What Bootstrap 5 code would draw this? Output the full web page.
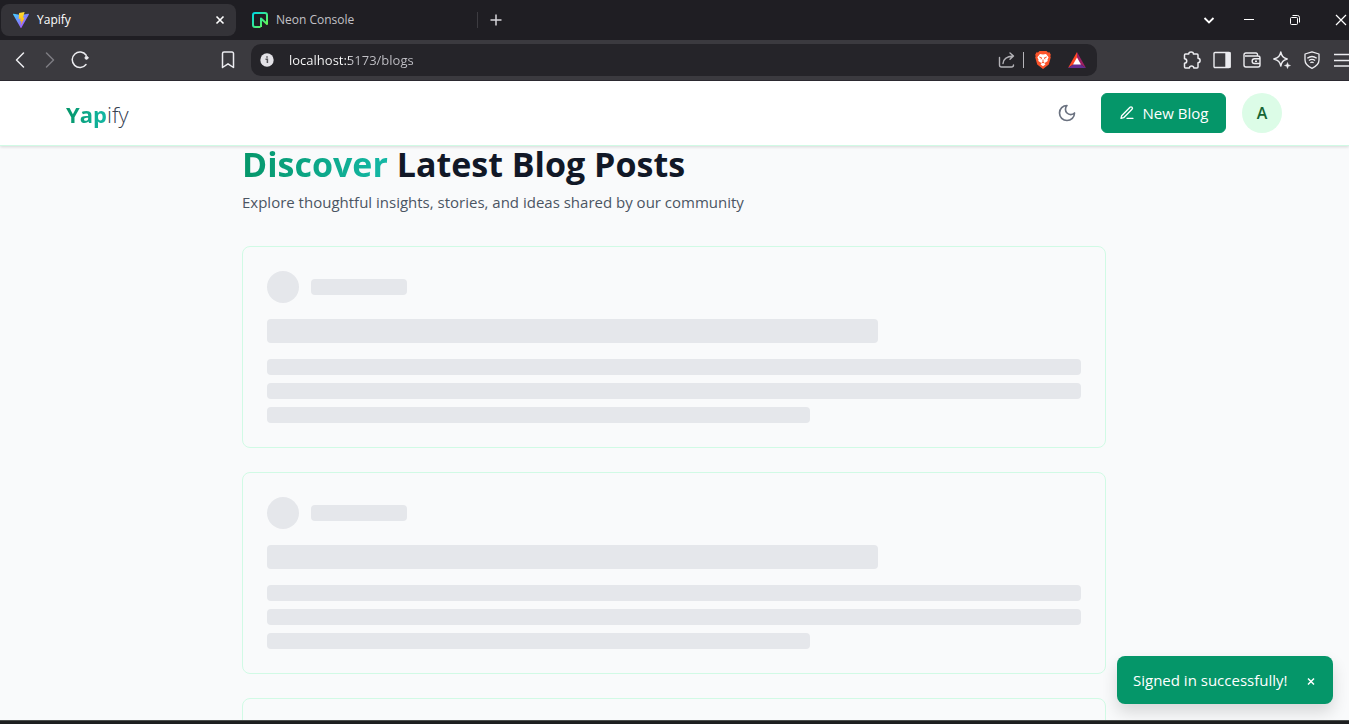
<!DOCTYPE html>
<html lang="en">
<head>
<meta charset="utf-8">
<meta name="viewport" content="width=device-width, initial-scale=1">
<title>Yapify</title>
<link rel="stylesheet" href="https://cdn.jsdelivr.net/npm/bootstrap@5.3.0/dist/css/bootstrap.min.css">
<style>
  body { font-family: "Open Sans", "Noto Sans", sans-serif; font-size: 15px; line-height: 24px; background: #1d1f1f; }
  svg { display: block; flex-shrink: 0; }
  button { color: inherit; }
  .icon-btn { border: 0; background: none; padding: 0; line-height: 1; }

  /* browser window */
  .tab-strip { height: 40px; background: #1f1e23; color: #fff; font-size: 12px; line-height: 16px; }
  .tab { height: 32px; width: 235px; margin-left: 1px; padding: 0 10px 0 12px; border-radius: 8px; }
  .tab.current { background: #343338; }
  .tab a { color: #fff; }
  .tab.other { padding-left: 15px; }
  .tab.other a { color: #c2c1c6; }
  .tab-rule { width: 1px; height: 16px; background: #3d3c41; margin-left: 5px; }
  .window-buttons { gap: 30px; }
  .tab-search { margin-right: -6px; }
  .tool-strip { height: 41px; background: #3b3a3f; border-bottom: 1px solid #2b2930; color: #ececf0; }
  .tools-left { width: 251px; padding: 0 13px 0 10px; }
  .tools-right { width: 252px; gap: 10px; }
  .address { height: 32px; background: #252429; border-radius: 10px; padding: 0 10px 0 8px; }
  .address input { border: 0; outline: 0; font-size: 13px; line-height: 20px; padding: 0; margin-left: 14px; min-width: 0; background: linear-gradient(to right, #fff 60px, #c3c2c8 60px); -webkit-background-clip: text; background-clip: text; color: transparent; caret-color: #fff; }
  .address-rule { width: 1px; height: 16px; background: #b5b4b9; margin: 0 7px; }

  /* site */
  .page { background: #f9fafb; min-height: 0; border-bottom: 1px solid #4b4f4d; margin-bottom: 3px; }
  .site-bar { background: #fff; border-bottom: 1px solid #d1fae5; box-shadow: 0 1px 3px rgba(0,0,0,.14); height: 65px; z-index: 2; }
  .site-inner { max-width: 1281px; padding: 0 33px 0 32px; }
  .brand { font-size: 22px; line-height: 32px; padding-top: 2px; font-weight: 300; color: #374151; text-decoration: none; }
  .fade-text { font-weight: 700; background: linear-gradient(to right, #059669, #14b8a6); -webkit-background-clip: text; background-clip: text; color: transparent; }
  .moon { color: #6b7280; margin-right: 24px; }
  .btn-new { --bs-btn-color: #fff; --bs-btn-bg: #059669; --bs-btn-border-color: #059669; --bs-btn-hover-color: #fff; --bs-btn-hover-bg: #047857; height: 40px; width: 125px; padding: 0; border-radius: 6px; font-size: 15px; font-weight: 500; gap: 8px; }
  .avatar { width: 40px; height: 40px; border-radius: 50%; background: #dcfce7; color: #166534; font-size: 16px; font-weight: 600; margin-left: 16px; }
  .feed { max-width: 897px; padding: 0 17px 0 16px; }
  .feed h1 { font-size: 34px; line-height: 40px; font-weight: 700; color: #111827; margin: -2px 0 6px; }
  .feed p { color: #4b5563; margin-bottom: 32px; }
  .post { border: 1px solid #d1fae5; border-radius: 8px; padding: 24px; margin-bottom: 24px; }
  .author { gap: 12px; }
  .bone { background: #e5e7eb; border-radius: 4px; height: 16px; }
  .bone.dot { width: 32px; height: 32px; border-radius: 50%; }
  .bone.name { width: 96px; }
  .bone.headline { height: 24px; width: 75%; }
  .bone.short { width: 66.6667%; }
  .notice { right: 16px; bottom: 16px; width: 216px; height: 48px; background: #059669; color: #fff; border-radius: 8px; padding: 0 16px; box-shadow: 0 8px 16px rgba(0,0,0,.14); z-index: 3; }
</style>
</head>
<body class="vh-100 d-flex flex-column overflow-hidden">

<header>
  <div class="tab-strip d-flex align-items-center overflow-hidden">
    <div class="tab current d-flex align-items-center">
      <svg width="16" height="16" viewBox="0 0 16 16"><defs><linearGradient id="va" x1="0" y1="0" x2="1" y2="1"><stop offset="0" stop-color="#41d1ff"/><stop offset="1" stop-color="#bd34fe"/></linearGradient><linearGradient id="vb" x1="0" y1="0" x2="0" y2="1"><stop offset="0" stop-color="#ffdd35"/><stop offset="1" stop-color="#ffa800"/></linearGradient></defs><path fill="url(#va)" d="M15.900 2.400 8.400 15.700a.4.4 0 0 1-.8 0L.1 2.400a.5.5 0 0 1 .5-.7L8 3l7.400-1.300a.5.5 0 0 1 .5.7z"/><path fill="url(#vb)" d="m11.600 0-5.500 1.100-.4 5.800 2-.4-.6 3 1.500-.4-.9 4.500 4-8.200-1.800.3z"/></svg>
      <a href="#" class="ms-2 text-decoration-none">Yapify</a>
      <button class="icon-btn ms-auto" aria-label="Close tab"><svg width="12" height="12" viewBox="0 0 12 12" stroke="#fff" stroke-width="1.600"><path d="m2.500 2.500 7 7m0-7-7 7"/></svg></button>
    </div>
    <div class="tab other d-flex align-items-center">
      <svg width="16" height="16" viewBox="0 0 16 16"><defs><linearGradient id="na" x1="0" y1="0" x2="1" y2="1"><stop offset="0" stop-color="#00d8e0"/><stop offset=".9" stop-color="#63f655"/></linearGradient></defs><path d="M8.500 15H3a2 2 0 0 1-2-2V3a2 2 0 0 1 2-2h10a2 2 0 0 1 2 2v9L9 6.500V15" fill="none" stroke="url(#na)" stroke-width="2" stroke-linejoin="round"/></svg>
      <a href="#" class="ms-2 text-decoration-none">Neon Console</a>
    </div>
    <div class="tab-rule"></div>
    <button class="icon-btn ms-2 ps-1" aria-label="New tab"><svg width="12" height="12" viewBox="0 0 12 12" stroke="#d6d5da" stroke-width="1.500"><path d="M6 .5v11M.5 6h11"/></svg></button>
    <div class="window-buttons d-flex align-items-center ms-auto">
      <button class="icon-btn tab-search" aria-label="Search tabs"><svg width="16" height="16" viewBox="0 0 16 16" fill="none" stroke="#fff" stroke-width="1.800"><path d="m3.500 6 4.500 4.500L12.500 6"/></svg></button>
      <button class="icon-btn" aria-label="Minimize"><svg width="16" height="16" viewBox="0 0 16 16" stroke="#fff"><path d="M3 7.500h10"/></svg></button>
      <button class="icon-btn" aria-label="Restore"><svg width="16" height="16" viewBox="0 0 16 16" fill="none" stroke="#fff"><rect x="3.500" y="5.500" width="7" height="7" rx="1"/><path d="M5.500 3.500h5a2 2 0 0 1 2 2v5"/></svg></button>
      <button class="icon-btn" aria-label="Close"><svg width="16" height="16" viewBox="0 0 16 16" stroke="#fff" stroke-width="1.200"><path d="m3 3 10 10M13 3 3 13"/></svg></button>
    </div>
  </div>
  <div class="tool-strip d-flex align-items-center overflow-hidden">
    <div class="tools-left d-flex align-items-center flex-shrink-0">
      <button class="icon-btn" aria-label="Back"><svg width="20" height="20" viewBox="0 0 20 20" fill="none" stroke="currentColor" stroke-width="1.500" stroke-linecap="round" stroke-linejoin="round"><path d="M13.500 3 6.500 10l7 7"/></svg></button>
      <button class="icon-btn ms-2 px-1" aria-label="Forward"><svg width="16" height="20" viewBox="2 0 16 20" fill="none" stroke="#7d7c82" stroke-width="1.500" stroke-linecap="round" stroke-linejoin="round"><path d="m6.500 3 7 7-7 7"/></svg></button>
      <button class="icon-btn ms-2" aria-label="Reload"><svg width="20" height="20" viewBox="0 0 20 20" fill="none" stroke="currentColor" stroke-width="1.500" stroke-linecap="round"><path d="M16.200 5.300A7.700 7.700 0 1 0 16 14.500"/><circle cx="16.500" cy="7.800" r="1.500" fill="currentColor" stroke-width="1"/></svg></button>
      <button class="icon-btn ms-auto" aria-label="Bookmark"><svg width="20" height="20" viewBox="0 0 20 20" fill="none" stroke="currentColor" stroke-width="1.500" stroke-linejoin="round"><path d="M4.500 3.500a1.500 1.500 0 0 1 1.500-1.500h8a1.500 1.500 0 0 1 1.500 1.500V17.500L10 13.800 4.500 17.500z"/></svg></button>
    </div>
    <div class="address d-flex align-items-center flex-grow-1">
      <svg width="16" height="16" viewBox="0 0 16 16"><circle cx="8" cy="8" r="6.700" fill="#e3e2e7"/><path d="M6.500 7.300H8.400V11M8 4.300v1.500" stroke="#56555a" stroke-width="1.500" fill="none"/></svg>
      <input class="flex-grow-1" aria-label="Address" value="localhost:5173/blogs">
      <button class="icon-btn" aria-label="Share"><svg width="18" height="18" viewBox="0 0 18 18" fill="none" stroke="#b3b2b7" stroke-width="1.400" stroke-linecap="round" stroke-linejoin="round"><path d="M1.500 6.500v7.500a2 2 0 0 0 2 2h10a2 2 0 0 0 2-2M5 12.500c.3-4 3-7 10-7.500M12 2l3.500 3L12 8.300"/></svg></button>
      <div class="address-rule"></div>
      <svg class="ms-1" width="16" height="18" viewBox="0 0 16 18"><path d="m4.500 0h7l1.500 1.600 1.500-.3 1.300 2.500-.5 1.500.5 1-2 7.200L8 18l-5.800-4.500L.2 6.300l.5-1L.2 3.800l1.300-2.500 1.500.3z" fill="#fb542b"/><path d="m5 3 3 .6L11 3l2.600 3.200-1.100 2.300.2 1.500-3 2 .7 1.500L8 15.300l-2.400-1.800.7-1.500-3-2 .2-1.500-1.100-2.300z" fill="#fff"/><path d="m4.300 6 2.300.8-.6 1.500M11.700 6l-2.300.8.6 1.500M8 8.500v2.800l-1.500.8M8 11.300l1.500.8" fill="none" stroke="#fb542b"/></svg>
      <svg class="ms-3" width="20" height="16" viewBox="0 0 20 16"><path d="M10 0 1 16l9-6z" fill="#ff4724"/><path d="M10 0v10l9 6z" fill="#9e1f63"/><path d="M1 16h18l-9-6z" fill="#662d91"/><path d="m10 5.500 4 7H6z" fill="#fff"/></svg>
    </div>
    <div class="tools-right d-flex align-items-center justify-content-end flex-shrink-0">
      <button class="icon-btn" aria-label="Extensions"><svg width="20" height="20" viewBox="0 0 20 20" fill="none" stroke="currentColor" stroke-width="1.500" stroke-linejoin="round"><path d="M3.500 4h3.300c-.3-2.800 4.900-2.800 4.600 0H15a1 1 0 0 1 1 1v3.300c2.800.2 2.800 4.300 0 4.500V17a1 1 0 0 1-1 1h-3.200c-.2-2.700-4.200-2.700-4.400 0H3.500a1 1 0 0 1-1-1v-3.700c3-.2 3-4.300 0-4.500V5a1 1 0 0 1 1-1z"/></svg></button>
      <button class="icon-btn" aria-label="Sidebar"><svg width="20" height="20" viewBox="0 0 20 20" fill="none" stroke="currentColor" stroke-width="1.400"><rect x="2" y="2.500" width="16" height="15" rx="1"/><path d="M14 3h4v14h-4z" fill="currentColor"/></svg></button>
      <button class="icon-btn" aria-label="Wallet"><svg width="20" height="20" viewBox="0 0 20 20" fill="none" stroke="currentColor" stroke-width="1.400" stroke-linejoin="round"><path d="M15.500 6V4.500a1.500 1.500 0 0 0-1.500-1.500H4a2 2 0 0 0-2 2v10a2 2 0 0 0 2 2h12a2 2 0 0 0 2-2V8a2 2 0 0 0-2-2H3M18 8.800h-5.500a2.300 2.300 0 0 0 0 4.700H18M13 11.200h2"/></svg></button>
      <button class="icon-btn" aria-label="Assistant"><svg width="20" height="20" viewBox="0 0 20 20" fill="none" stroke="currentColor" stroke-width="1.400" stroke-linejoin="round"><path d="M8.800 2c.9 4.200 2 5.600 6.400 7-4.400 1.400-5.500 2.800-6.400 7-.9-4.200-2.200-5.600-7-7 4.800-1.400 6.100-2.800 7-7z"/><path d="m15.500 12.500.8 2.200 2.200.8-2.200.8-.8 2.200-.8-2.200-2.200-.8 2.200-.8z" fill="currentColor" stroke-width=".5"/></svg></button>
      <button class="icon-btn" aria-label="VPN"><svg width="20" height="20" viewBox="0 0 20 20" fill="none" stroke="currentColor" stroke-width="1.300" stroke-linejoin="round"><path d="M10 1.800 17 4v6c0 4-3 6.500-7 8.300C6 16.500 3 14 3 10V4z"/><path d="M5.300 8.300c3-2.300 6.400-2.300 9.400 0M6.900 10.600c2-1.500 4.200-1.500 6.200 0M8.400 12.800c1-.8 2.200-.8 3.200 0"/></svg></button>
      <button class="icon-btn" aria-label="Menu"><svg width="17" height="20" viewBox="0 0 17 20" stroke="currentColor" stroke-width="1.500"><path d="M2 4.500h15M2 10.500h15M2 16h15"/></svg></button>
    </div>
  </div>
</header>

<div class="page position-relative flex-grow-1 overflow-hidden">
  <nav class="site-bar position-relative">
    <div class="site-inner mx-auto h-100 d-flex align-items-center">
      <a class="brand" href="#"><span class="fade-text">Yap</span>ify</a>
      <button class="icon-btn moon ms-auto" aria-label="Dark mode"><svg width="20" height="20" viewBox="0 0 24 24" fill="none" stroke="currentColor" stroke-width="2" stroke-linecap="round" stroke-linejoin="round"><path d="M12 3a6 6 0 0 0 9 9 9 9 0 1 1-9-9Z"/></svg></button>
      <button class="btn btn-new d-flex align-items-center justify-content-center"><svg width="16" height="16" viewBox="0 0 24 24" fill="none" stroke="currentColor" stroke-width="2" stroke-linecap="round" stroke-linejoin="round"><path d="M12 20h9M16.500 3.500a2.120 2.120 0 0 1 3 3L7 19l-4 1 1-4Z"/></svg>New Blog</button>
      <button class="icon-btn avatar">A</button>
    </div>
  </nav>
  <main class="feed mx-auto">
    <h1><span class="fade-text">Discover</span> Latest Blog Posts</h1>
    <p>Explore thoughtful insights, stories, and ideas shared by our community</p>
    <article class="post">
      <div class="author d-flex align-items-center mb-3"><div class="bone dot"></div><div class="bone name"></div></div>
      <div class="bone headline mb-3"></div>
      <div class="bone mb-2"></div><div class="bone mb-2"></div><div class="bone short"></div>
    </article>
    <article class="post">
      <div class="author d-flex align-items-center mb-3"><div class="bone dot"></div><div class="bone name"></div></div>
      <div class="bone headline mb-3"></div>
      <div class="bone mb-2"></div><div class="bone mb-2"></div><div class="bone short"></div>
    </article>
    <article class="post">
      <div class="author d-flex align-items-center mb-3"><div class="bone dot"></div><div class="bone name"></div></div>
      <div class="bone headline mb-3"></div>
      <div class="bone mb-2"></div><div class="bone mb-2"></div><div class="bone short"></div>
    </article>
  </main>
  <div class="notice position-absolute d-flex align-items-center justify-content-between" role="status">
    <span class="text-nowrap">Signed in successfully!</span>
    <button class="icon-btn pt-1" aria-label="Dismiss"><svg width="12" height="12" viewBox="0 0 12 12" stroke="#fff" stroke-width="1.500"><path d="m3 2.500 6 6m0-6-6 6"/></svg></button>
  </div>
</div>

<script src="https://cdn.jsdelivr.net/npm/bootstrap@5.3.0/dist/js/bootstrap.bundle.min.js"></script>
</body>
</html>
